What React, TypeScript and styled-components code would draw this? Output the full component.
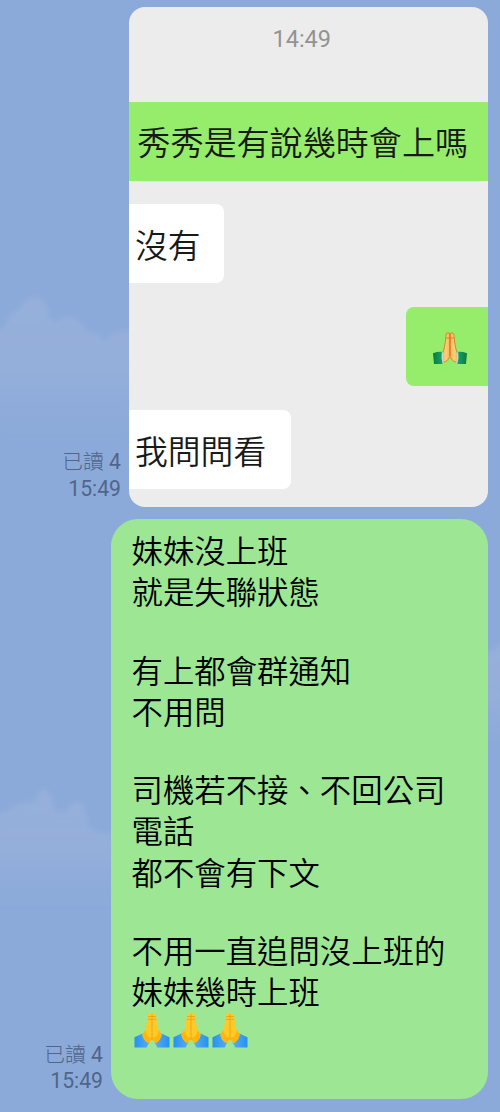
import React from "react";
import styled, { createGlobalStyle } from "styled-components";

const GlobalStyle = createGlobalStyle`
  * { box-sizing: border-box; }
  body { margin: 0; background: #8caad9; }
`;

const Screen = styled.main`
  position: relative;
  width: 500px;
  height: 1112px;
  overflow: hidden;
  background: #8caad9;
  font-family: Roboto, "Noto Sans CJK TC", sans-serif;
`;

const Sky = styled.svg`
  position: absolute;
  inset: 0;
`;

const Chat = styled.div`
  position: relative;
  display: flex;
  flex-direction: column;
  gap: 12.5px;
  padding: 6.5px 12.5px 0 0;
`;

const MessageRow = styled.section`
  display: flex;
  justify-content: flex-end;
  align-items: flex-end;
  gap: 8px;
`;

const Receipt = styled.div`
  padding-bottom: 4.5px;
  font-size: 21.2px;
  line-height: 26.5px;
  font-weight: 400;
  color: #50658a;
  text-align: right;
  white-space: nowrap;
`;

const ReadLabel = styled.span`
  font-weight: 300;
  font-size: 20.8px;
`;

const Photo = styled.div`
  width: 358.5px;
  height: 500px;
  border-radius: 16px;
  overflow: hidden;
  background: #ececec;
  display: flex;
  flex-direction: column;
`;

const PhotoTime = styled.div`
  height: 95px;
  padding: 18px 13px 0 0;
  text-align: center;
  font-size: 23.5px;
  line-height: 28px;
  color: #939393;
`;

const Snippets = styled.div`
  display: flex;
  flex-direction: column;
  gap: 23.7px;
`;

const Snippet = styled.div<{ $width: number; $sent?: boolean; $full?: boolean }>`
  width: ${(p) => p.$width}px;
  height: 79px;
  align-self: ${(p) => (p.$sent ? "flex-end" : "flex-start")};
  padding-left: ${(p) => (p.$full ? 8.3 : 6)}px;
  background: ${(p) => (p.$sent ? "#96ec6b" : "#ffffff")};
  border-radius: ${(p) => (p.$full ? "0" : p.$sent ? "8px 0 0 8px" : "0 8px 8px 0")};
  font-size: ${(p) => (p.$full ? 33.1 : 32.8)}px;
  font-weight: 350;
  line-height: ${(p) => (p.$full ? 84 : 86)}px;
  color: #171a17;
  white-space: nowrap;
`;

const SmallHands = styled.svg`
  display: block;
  width: 36px;
  height: 34px;
  margin: 24px 0 0 20px;
`;

const Bubble = styled.article`
  width: 376.5px;
  height: 580px;
  padding: 13px 20px 0 20.5px;
  border-radius: 27px;
  background: #9de794;
  color: #000000;
  font-size: 31.4px;
  font-weight: 350;
  line-height: 41.3px;
`;

const Paragraph = styled.p`
  margin: 0 0 37px;
  white-space: nowrap;
  &:last-of-type { margin-bottom: 0; }
`;

const HandsRow = styled.div`
  display: flex;
  gap: 3.2px;
  padding-left: 2px;
  margin-top: -3px;
`;

const Hands = styled.svg`
  display: block;
  width: 36px;
  height: 36px;
`;

function Clouds() {
  return (
    <Sky width="500" height="1112" viewBox="0 0 500 1112" aria-hidden="true">
      <defs>
        <linearGradient id="mist" x1="0" y1="0" x2="0" y2="1">
          <stop offset="0" stopColor="#9ab3dc" stopOpacity=".7" />
          <stop offset=".5" stopColor="#98b1db" stopOpacity=".65" />
          <stop offset="1" stopColor="#8caad9" stopOpacity="0" />
        </linearGradient>
        <filter id="soft"><feGaussianBlur stdDeviation="2.5" /></filter>
      </defs>
      <g fill="url(#mist)" filter="url(#soft)">
        <path d="M-5 330 L4 328 Q8 313 20 309 Q27 296 37 297 Q48 302 49 318 L57 322 Q67 312 79 321 L87 332 L98 334 L104 342 L114 333 L132 330 V450 H-5Z" />
        <path d="M-5 815 L10 810 Q18 801 35 803 Q37 790 45 790 Q54 797 54 811 L66 812 Q73 799 83 804 L88 826 L99 833 L116 834 V918 H-5Z" />
        <path d="M484 654 L494 650 L505 642 V760 H484Z" />
      </g>
    </Sky>
  );
}

function GreenCuffHands() {
  return (
    <SmallHands viewBox="0 0 36 34" aria-label="Folded hands">
      <defs>
        <linearGradient id="cuffGreen" x1="0" x2="1">
          <stop offset="0" stopColor="#087b43" />
          <stop offset="1" stopColor="#1ca567" />
        </linearGradient>
        <linearGradient id="skin" x1="0" x2="1">
          <stop offset="0" stopColor="#f0a848" />
          <stop offset=".5" stopColor="#ffd07a" />
          <stop offset="1" stopColor="#f7b455" />
        </linearGradient>
      </defs>
      {["", "translate(36 0) scale(-1 1)"].map((side) => (
        <g key={side} transform={side}>
          <path d="M14.2 3 Q14.6 1.7 16 2 Q17.6 1.6 18 3 V25.5 Q16 30.5 10.5 32 L9.5 25 Q12.6 18 13.2 12Z" fill="url(#skin)" stroke="#dc7e28" strokeWidth=".9" />
          <path d="M1 22.3 Q6 20.3 11.3 21 Q9.6 27 11.6 33 H2Z" fill="url(#cuffGreen)" />
          <path d="M9.8 21.2 L11.5 21 Q10.2 27 12 33 H10.6 Q8.8 27 9.8 21.2Z" fill="#b9ddd1" />
        </g>
      ))}
      <path d="M14 7 H22 M18 3 V25" stroke="#d87925" strokeWidth=".9" />
    </SmallHands>
  );
}

function BlueCuffHands() {
  return (
    <Hands viewBox="0 0 36 36" aria-label="Folded hands">
      <defs>
        <linearGradient id="cuffLeft" x1="0" x2="1">
          <stop offset="0" stopColor="#2592ee" />
          <stop offset="1" stopColor="#5aacf6" />
        </linearGradient>
        <linearGradient id="cuffRight" x1="0" x2="1">
          <stop offset="0" stopColor="#5aacf6" />
          <stop offset="1" stopColor="#2592ee" />
        </linearGradient>
      </defs>
      <path d="M.5 25.2 L8.5 21.6 L15.5 30.5 Q14 32.5 12.8 35.4 H.5Z" fill="url(#cuffLeft)" />
      <path d="M35.5 25.2 L27.5 21.6 L20.5 30.5 Q22 32.5 23.2 35.4 H35.5Z" fill="url(#cuffRight)" />
      <path d="M14.2 2 Q16.2 .2 18 1.8 Q19.8 .2 21.8 2 L23.3 12 Q24 18 27.7 23 Q26 29 21.7 31 Q20 28 18 28 Q16 28 14.3 31 Q10 29 8.3 23 Q12 18 12.7 12Z" fill="#ffca28" />
      <path d="M8.3 23 Q10 19.8 11.2 18 Q12.5 25.5 18 26 Q23.5 25.5 24.8 18 Q26 19.8 27.7 23 Q26 29 21.7 31 Q20 28 18 28 Q16 28 14.3 31 Q10 29 8.3 23Z" fill="#ffb50b" />
      <path d="M14.1 4.5 H21.9 M13.6 7.3 H22.4 M18 2 V27" fill="none" stroke="#e59b16" strokeWidth=".75" />
    </Hands>
  );
}

export default function App() {
  return (
    <>
      <GlobalStyle />
      <Screen>
        <Clouds />
        <Chat>
          <MessageRow>
            <Receipt><ReadLabel>已讀</ReadLabel> 4<br />15:49</Receipt>
            <Photo>
              <PhotoTime>14:49</PhotoTime>
              <Snippets>
                <Snippet $width={358.5} $sent $full>秀秀是有說幾時會上嗎</Snippet>
                <Snippet $width={95}>沒有</Snippet>
                <Snippet $width={81.5} $sent><GreenCuffHands /></Snippet>
                <Snippet $width={162}>我問問看</Snippet>
              </Snippets>
            </Photo>
          </MessageRow>
          <MessageRow>
            <Receipt><ReadLabel>已讀</ReadLabel> 4<br />15:49</Receipt>
            <Bubble>
              <Paragraph>妹妹沒上班<br />就是失聯狀態</Paragraph>
              <Paragraph>有上都會群通知<br />不用問</Paragraph>
              <Paragraph>司機若不接、不回公司<br />電話<br />都不會有下文</Paragraph>
              <Paragraph>不用一直追問沒上班的<br />妹妹幾時上班</Paragraph>
              <HandsRow><BlueCuffHands /><BlueCuffHands /><BlueCuffHands /></HandsRow>
            </Bubble>
          </MessageRow>
        </Chat>
      </Screen>
    </>
  );
}
